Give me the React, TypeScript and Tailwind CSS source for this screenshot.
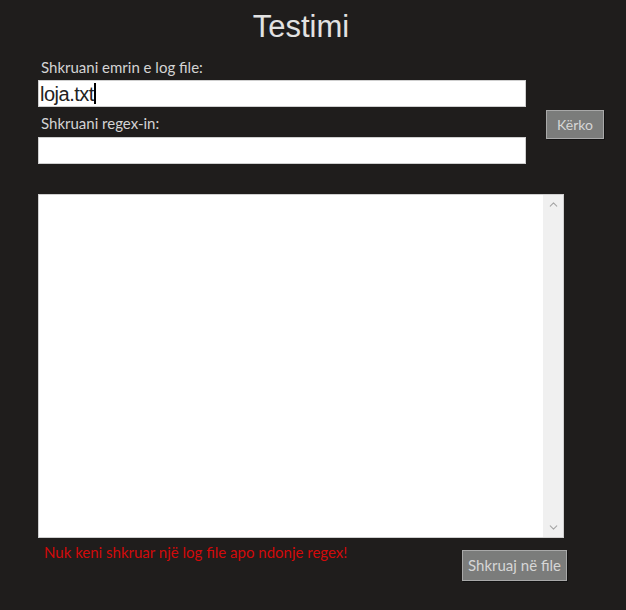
import { ChevronUp, ChevronDown } from 'lucide-react';

const uiFont = { fontFamily: 'Lato, "Noto Sans", sans-serif' };

export default function App() {
  return (
    <div className="w-[626px] h-[610px] bg-[#1f1d1c] overflow-hidden" style={uiFont}>
      {/* Title */}
      <h1
        className="pt-[9px] pr-[24px] text-center text-[31px] leading-[36px] text-[#e2e2e2]"
        style={{ fontFamily: '"Liberation Sans", Arial, sans-serif' }}
      >
        Testimi
      </h1>

      {/* Inputs + search button */}
      <div className="flex items-start pl-[38px] mt-[15px]">
        <div className="w-[488px] flex flex-col">
          <label className="pl-[3px] mb-[6px] text-[15px] leading-[14px] text-[#d4d4d4]">
            Shkruani emrin e log file:
          </label>
          <div className="h-[27px] bg-white border border-[#cfcfcf] flex items-center px-[1px]">
            <span
              className="text-[20px] text-[#222] tracking-[-0.5px]"
              style={{ fontFamily: '"Liberation Sans", Arial, sans-serif' }}
            >
              loja.txt
            </span>
            <span className="w-[2px] h-[21px] bg-black" />
          </div>
          <label className="pl-[3px] mt-[8px] mb-[6px] text-[15px] leading-[16px] text-[#d4d4d4]">
            Shkruani regex-in:
          </label>
          <div className="h-[27px] bg-white border border-[#cfcfcf]" />
        </div>
        <button className="ml-[20px] mt-[50px] w-[58px] h-[29px] bg-[#7b7c7b] border border-[#a9a9a9] shadow-[1px_1px_0_#111] text-[14px] text-[#d6d6d6]">
          Kërko
        </button>
      </div>

      {/* Output area */}
      <div className="ml-[38px] mt-[30px] w-[526px] h-[344px] bg-white border border-[#cfcfcf] flex justify-end">
        <div className="w-[20px] h-full bg-[#f0f0f0] flex flex-col items-center justify-between py-[3px]">
          <ChevronUp className="w-[13px] h-[13px] text-[#a6a6a6]" strokeWidth={2} />
          <ChevronDown className="w-[13px] h-[13px] text-[#a6a6a6]" strokeWidth={2} />
        </div>
      </div>

      {/* Status + write button */}
      <div className="flex items-start pl-[44px] pr-[59px]">
        <p className="mt-[4px] flex-1 text-[15px] leading-[20px] text-[#d20a0a]">
          Nuk keni shkruar një log file apo ndonje regex!
        </p>
        <button className="mt-[12px] w-[105px] h-[31px] bg-[#7b7c7b] border border-[#a9a9a9] shadow-[1px_1px_0_#111] text-[15px] text-[#d6d6d6]">
          Shkruaj në file
        </button>
      </div>
    </div>
  );
}
